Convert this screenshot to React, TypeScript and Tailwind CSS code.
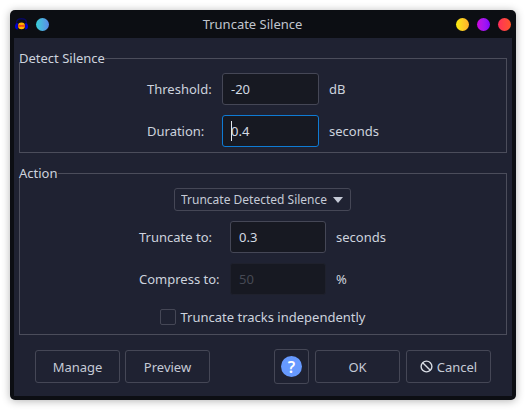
import type { ReactNode } from "react";

const field =
  "h-8 rounded-[3px] border border-[#454756] bg-[#171922] px-2 text-[13px] text-[#d3dae3] outline-none focus:border-[#0f7bd4] disabled:border-[#1f212d] disabled:text-[#464954]";
const button =
  "flex h-[33px] w-[85px] items-center justify-center gap-1 rounded-[3px] border border-[#454756] text-[#c5cad6]";

function Group({ title, children }: { title: string; children: ReactNode }) {
  return (
    <fieldset className="border border-[#4b4d5b]">
      <legend className="-ml-px bg-[#1f2232] leading-2">{title}</legend>
      {children}
    </fieldset>
  );
}

function AppIcon() {
  return (
    <svg className="h-[13px] w-[13px]" viewBox="0 0 13 13" aria-hidden="true">
      <path d="M1.5 7 V5 C1.5 2 3.5 0.8 6.5 0.8 S11.5 2 11.5 5 V7" fill="none" stroke="#08085e" strokeWidth="1.5" />
      <path d="M2.8 5 C1 5 0 6.6 0 8.6 S1 11.4 2.8 11.4 Z" fill="#0000d0" />
      <path d="M10.2 5 C12 5 13 6.6 13 8.6 S12 11.4 10.2 11.4 Z" fill="#0000d0" />
      <ellipse cx="6.5" cy="7.9" rx="3.4" ry="3.3" fill="#ffb400" />
      <path d="M3.2 7.9 L4.5 7.2 L6.5 7.5 L8.5 7.2 L9.8 7.9 L8.5 8.5 L6.5 8.3 L4.5 8.6 Z" fill="#f0321e" stroke="#f0321e" strokeWidth="0.6" />
    </svg>
  );
}

export default function App() {
  return (
    <div className="bg-white p-2.5 font-['Noto_Sans',sans-serif] text-[13px] leading-5 text-[#cdd3de]">
      <div className="overflow-hidden rounded-[5px] bg-[#0c0e13] px-1 pb-1 shadow-[0_1px_9px_rgba(0,0,0,0.3)]">
        <header className="flex h-7 items-center px-px">
          <AppIcon />
          <button aria-label="Pin" className="ml-2 size-[13px] rounded-full bg-linear-to-r from-[#36cfd6] to-[#5a8ae8]" />
          <h1 className="flex-1 text-center text-[#c0c5ce]">Truncate Silence</h1>
          <div className="flex gap-2">
            <button aria-label="Minimize" className="size-[13px] rounded-full bg-linear-to-r from-[#f8ec0c] to-[#ffae2c]" />
            <button aria-label="Maximize" className="size-[13px] rounded-full bg-linear-to-r from-[#cc00de] to-[#8400ff]" />
            <button aria-label="Close" className="size-[13px] rounded-full bg-linear-to-r from-[#ff2c58] to-[#ff5426]" />
          </div>
        </header>

        <main className="bg-[#1f2232] pt-4 pb-3">
          <div className="flex flex-col gap-4 px-[5px]">
            <Group title="Detect Silence">
              <div className="grid grid-cols-[65px_97px_50px] items-center justify-center gap-2.5 pt-[11px] pb-[5px]">
                <label htmlFor="threshold">Threshold:</label>
                <input id="threshold" className={field} defaultValue="-20" />
                <span>dB</span>
                <label htmlFor="duration">Duration:</label>
                <div className="relative flex">
                  <input id="duration" className={`${field} w-full caret-transparent`} defaultValue="0.4" autoFocus />
                  <span className="absolute top-1.5 left-[9px] h-5 w-px bg-[#e4e8ee]" />
                </div>
                <span>seconds</span>
              </div>
            </Group>

            <Group title="Action">
              <div className="flex flex-col items-center pt-[11px] pr-px pb-[7px]">
                <div className="relative flex">
                  <select
                    aria-label="Action"
                    className="h-[23px] w-[177px] appearance-none rounded-[3px] border border-[#454756] bg-transparent pl-1.5 text-xs text-[#c5cad6]"
                  >
                    <option>Truncate Detected Silence</option>
                    <option>Compress Excess Silence</option>
                  </select>
                  <svg className="pointer-events-none absolute top-[9px] right-2 h-[6px] w-[10px]" viewBox="0 0 10 6" aria-hidden="true">
                    <path d="M0 0 H10 L5 6 Z" fill="#c5cad6" />
                  </svg>
                </div>
                <div className="mt-2.5 grid grid-cols-[81px_96px_50px] items-center gap-2.5">
                  <label htmlFor="truncate">Truncate to:</label>
                  <input id="truncate" className={field} defaultValue="0.3" />
                  <span>seconds</span>
                  <label htmlFor="compress">Compress to:</label>
                  <input id="compress" className={field} defaultValue="50" disabled />
                  <span>%</span>
                </div>
                <label className="mt-3 flex items-center gap-[5px]">
                  <input type="checkbox" className="size-4 appearance-none rounded-[2px] border border-[#454756] checked:bg-[#0f7bd4]" />
                  Truncate tracks independently
                </label>
              </div>
            </Group>
          </div>

          <footer className="mt-3.5 flex items-center justify-between px-[21px]">
            <div className="flex gap-[5px]">
              <button className={button}>Manage</button>
              <button className={button}>Preview</button>
            </div>
            <div className="flex items-center gap-1.5">
              <button
                aria-label="Help"
                className="flex size-[35px] items-center justify-center rounded-[3px] border border-[#454756]"
              >
                <span className="flex size-[21px] items-center justify-center rounded-full bg-[#6699ff] text-base font-semibold text-white">?</span>
              </button>
              <button className={button}>OK</button>
              <button className={button}>
                <svg className="size-[13px]" viewBox="0 0 13 13" fill="none" stroke="#d8dce4" strokeWidth="1.4" aria-hidden="true">
                  <circle cx="6.5" cy="6.5" r="5.4" />
                  <path d="M2.7 2.7 L10.3 10.3" />
                </svg>
                Cancel
              </button>
            </div>
          </footer>
        </main>
      </div>
    </div>
  );
}
